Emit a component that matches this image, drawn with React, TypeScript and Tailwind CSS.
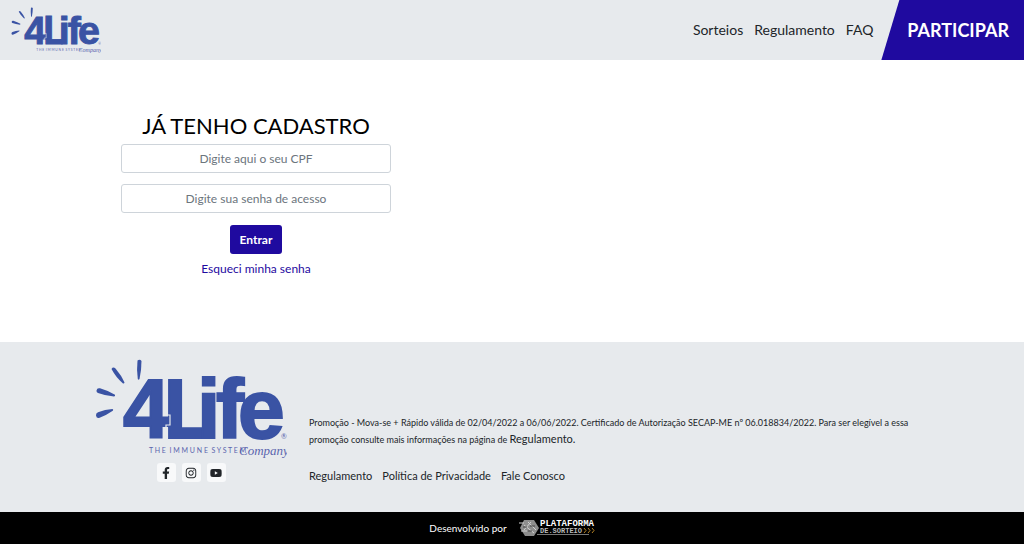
import React from "react";
import { FaFacebookF, FaInstagram, FaYoutube } from "react-icons/fa";

function BrandLogo({ className }: { className: string }) {
  return (
    <svg viewBox="0 0 192 100" className={className} role="img" aria-label="4Life">
      <g fill="#3a53a4">
        <path d="M42.500 1.500q2.500-1.500 4 .5q0 9-2 18q-1 1.500-1.700 0q-1.300-9-.3-18.500z" />
        <path d="M16.500 10q1.500-2.500 4-.5q6 7 9 14q-.2 1.300-1.500 1q-7-6-11.500-14.500z" />
        <path d="M1.500 31.500q.5-3 3.500-2.200q9 2.700 15 6.400q.5 1.600-1 1.800q-9-.8-16-3.500q-1.800-.8-1.500-2.500z" />
        <path d="M1 56.500q-.3-2.200 2-3.300q7-2.700 14.500-3.200q1.300.6.300 1.700q-6.500 4.600-13.800 7.300q-2.500.5-3-2.500z" />
      </g>
      <g
        fill="#3a53a4"
        stroke="#3a53a4"
        strokeWidth="2"
        fontFamily="'Liberation Sans', sans-serif"
        fontWeight="700"
        fontSize="84"
      >
        <text x="28" y="79">4</text>
        <text x="68" y="79" fontFamily="Lato, sans-serif" fontWeight="900" fontSize="80">L</text>
        <text x="102" y="79">i</text>
        <text x="121" y="79">f</text>
        <text x="143" y="79">e</text>
      </g>
      <path d="M71 18v38h4v10h-4v14" fill="none" stroke="#e7eaed" strokeWidth="1.200" />
      <g fill="#5b65ad" fontFamily="Lato, sans-serif">
        <text x="54" y="94" fontSize="7">T H E&#160; I M M U N E&#160; S Y S T E M</text>
        <text x="144" y="96" fontSize="13" fontFamily="'Liberation Serif', serif" fontStyle="italic">Company</text>
        <text x="186" y="80" fontSize="7">®</text>
      </g>
    </svg>
  );
}

function PlatformLogo() {
  return (
    <svg viewBox="0 0 76 18" className="h-[18px] w-[76px]" role="img" aria-label="Plataforma de Sorteio">
      <path d="M5 1h10l5 8-5 8H6L1 9z" fill="#8d8d8d" />
      <path d="M0 4h5M2 12h6M5 6l10 8M9 3l8 8M5 11l7-8" stroke="#d0d0d0" fill="none" />
      <path d="M4 8h4M11 7h5M9 12h4" stroke="#454545" fill="none" />
      <path d="M18 15.500h52" stroke="#777" fill="none" />
      <g fontFamily="'Liberation Mono', monospace" fontWeight="700">
        <text x="21" y="7" fontSize="9" fill="#fff">PLATAFORMA</text>
        <text x="21" y="14" fontSize="7" fill="#bbb">DE.SORTEIO</text>
      </g>
      <path d="M65 9l2 2.500-2 2.500M69 9l2 2.500-2 2.500M73 9l2 2.500-2 2.500" stroke="#b58225" fill="none" />
    </svg>
  );
}

const socials = [
  { name: "Facebook", Icon: FaFacebookF },
  { name: "Instagram", Icon: FaInstagram },
  { name: "YouTube", Icon: FaYoutube },
];

const fieldClass =
  "h-[29px] w-full rounded-[3px] border border-[#ced4da] bg-white text-center text-xs text-[#495057] placeholder:text-[#6c757d]";

export default function App() {
  return (
    <div className="flex min-h-screen flex-col bg-white font-[Lato,sans-serif] text-[#212529]">
      <header className="flex h-[60px] items-center justify-between bg-[#e7eaed]">
        <a href="#inicio" className="ml-[11px]">
          <BrandLogo className="h-[47px] w-[90px]" />
        </a>
        <div className="flex items-center self-stretch">
          <nav className="flex gap-[11px] text-sm">
            <a href="#sorteios">Sorteios</a>
            <a href="#regulamento">Regulamento</a>
            <a href="#faq">FAQ</a>
          </nav>
          <a
            href="#participar"
            className="ml-2 flex items-center self-stretch bg-[#1f0a9f] pr-[15px] pl-[26px] text-lg font-bold text-white [clip-path:polygon(18px_0,100%_0,100%_100%,0_100%)]"
          >
            PARTICIPAR
          </a>
        </div>
      </header>

      <main className="grid flex-1 grid-cols-2 pt-[52px]">
        <form className="mx-auto flex w-[270px] flex-col items-center" onSubmit={(e) => e.preventDefault()}>
          <h1 className="text-[22px] leading-7 text-black">JÁ TENHO CADASTRO</h1>
          <input className={`${fieldClass} mt-1`} aria-label="CPF" placeholder="Digite aqui o seu CPF" />
          <input
            className={`${fieldClass} mt-[11px]`}
            type="password"
            aria-label="Senha"
            placeholder="Digite sua senha de acesso"
          />
          <button
            type="submit"
            className="mt-3 h-[29px] rounded-[3px] bg-[#1f0a9f] px-[10px] text-xs font-bold text-white"
          >
            Entrar
          </button>
          <a href="#senha" className="mt-[7px] text-xs text-[#1f0a9f]">
            Esqueci minha senha
          </a>
        </form>
      </main>

      <footer>
        <div className="bg-[#e7eaed]">
          <div className="mx-auto flex h-[170px] max-w-[856px] gap-[22px] px-[11px] pt-[17px]">
            <div className="flex w-[192px] flex-col items-center">
              <BrandLogo className="h-[100px] w-[192px]" />
              <div className="mt-1 flex gap-[6px]">
                {socials.map(({ name, Icon }) => (
                  <a
                    key={name}
                    href={`#${name.toLowerCase()}`}
                    aria-label={name}
                    className="flex size-[19px] items-center justify-center rounded-[3px] bg-[#f8f9fa]"
                  >
                    <Icon className="size-3" />
                  </a>
                ))}
              </div>
            </div>
            <div className="flex-1 pt-[56px]">
              <p className="text-[9px] leading-4">
                Promoção - Mova-se + Rápido válida de 02/04/2022 a 06/06/2022. Certificado de Autorização SECAP-ME nº
                06.018834/2022. Para ser elegível a essa promoção consulte mais informações na página de{" "}
                <a href="#regulamento" className="text-[11px]">
                  Regulamento.
                </a>
              </p>
              <nav className="mt-5 flex gap-[10px] text-[11px] leading-4">
                <a href="#regulamento">Regulamento</a>
                <a href="#privacidade">Política de Privacidade</a>
                <a href="#contato">Fale Conosco</a>
              </nav>
            </div>
          </div>
        </div>
        <div className="flex h-8 items-center justify-center gap-3 bg-black text-[10px] text-white">
          <span>Desenvolvido por</span>
          <PlatformLogo />
        </div>
      </footer>
    </div>
  );
}
